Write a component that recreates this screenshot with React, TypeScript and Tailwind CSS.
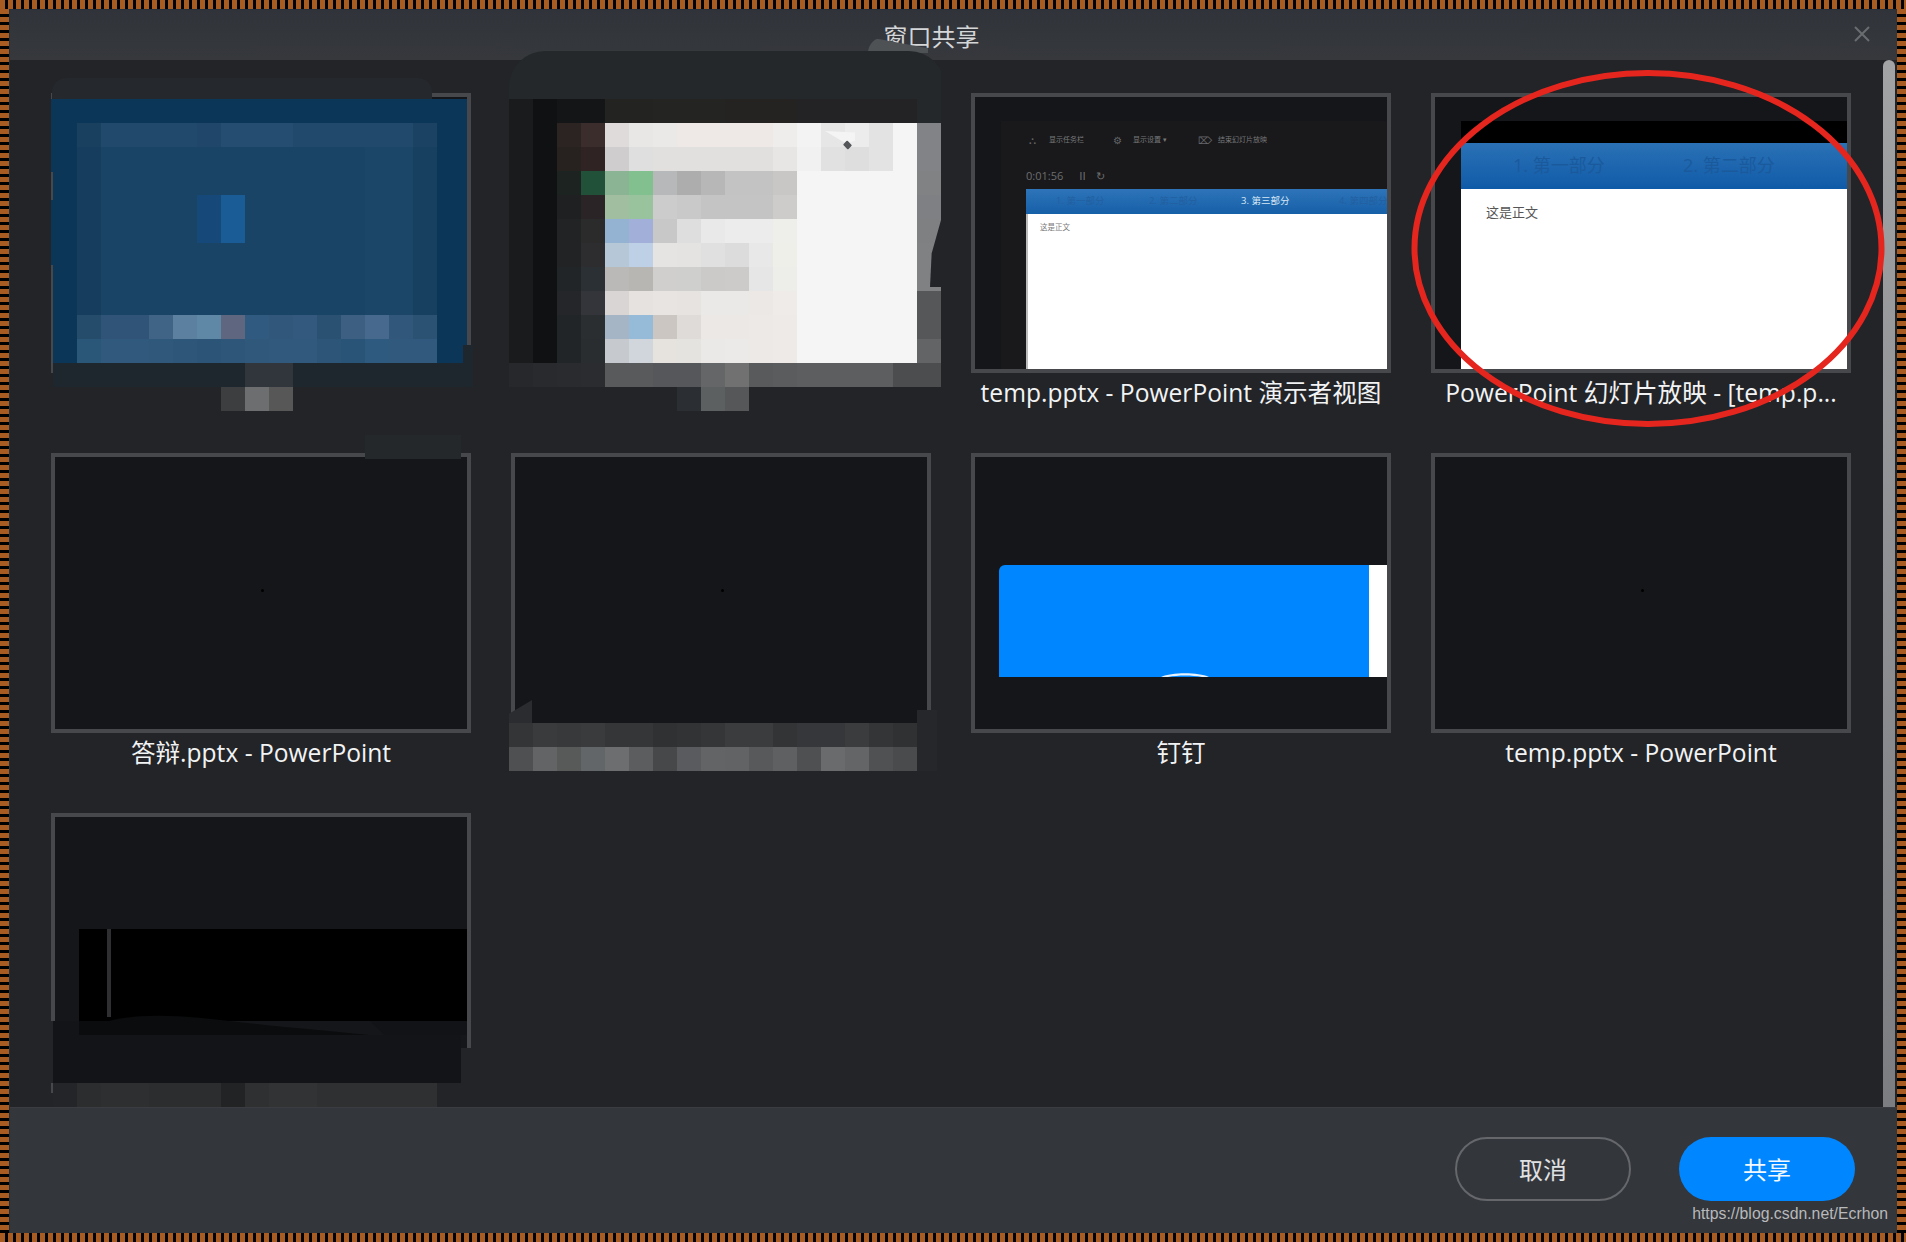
const FONT = "font-['Open_Sans','Noto_Sans_CJK_SC',sans-serif]";

type Cell = string | null;

// pixelated regions that were blurred out in the screenshot, 24px blocks
function Mosaic({ x, y, rows, cell = 24 }: { x: number; y: number; rows: Cell[][]; cell?: number }) {
  return (
    <div className="absolute flex flex-col" style={{ left: x, top: y }}>
      {rows.map((row, i) => (
        <div key={i} className="flex">
          {row.map((c, j) => (
            <div key={j} style={{ width: cell, height: cell, background: c ?? "transparent" }} />
          ))}
        </div>
      ))}
    </div>
  );
}

const W = "#f5f5f5";
const _ = null;

const BLUE_ROW = ["#173d5e", "#1a4466", "#1a4466", "#1a4466", "#1a4466", "#1a4466", "#1a4466", "#1a4466", "#1a4466", "#1a4466", "#1a4466", "#1a4466", "#1b4668", "#1b4668", "#173f60"];
const BLUE_ROW_MARK = ["#173d5e", "#1a4466", "#1a4466", "#1a4466", "#1a4466", "#16497a", "#1a5c96", "#1a4466", "#1a4466", "#1a4466", "#1a4466", "#1a4466", "#1b4668", "#1b4668", "#173f60"];

const MOSAIC_1: Cell[][] = [
  ["#1a4060", "#21496b", "#21496b", "#21496b", "#21496b", "#20466a", "#254d71", "#254d71", "#254d71", "#21496b", "#21496b", "#21496b", "#21496b", "#21496b", "#1c4263"],
  BLUE_ROW,
  BLUE_ROW,
  BLUE_ROW_MARK,
  BLUE_ROW_MARK,
  BLUE_ROW,
  BLUE_ROW,
  BLUE_ROW,
  ["#264c6c", "#2f5478", "#2f5478", "#3f6485", "#5c80a0", "#5f87a6", "#5e6680", "#305a80", "#31587b", "#335a7e", "#2a5072", "#3d6082", "#46698d", "#31587b", "#2b5272"],
  ["#2a5678", "#31597d", "#31597d", "#2f587b", "#2d5679", "#2b5477", "#2d5679", "#2f587b", "#31597d", "#31597d", "#2c5578", "#2a5378", "#2e5a80", "#31597d", "#31597d"],
];

const SIDE_L = ["#191b1d", "#101113"];

const MOSAIC_2: Cell[][] = [
  [...SIDE_L, "#141517", "#141517", "#232421", "#232421", "#242422", "#242422", "#242422", "#242321", "#242321", "#242321", "#232325", "#232325", "#232325", "#232325", "#232325", "#25282b"],
  [...SIDE_L, "#2b2422", "#3a2d2b", "#dedbda", "#e8e7e6", "#ebe9e8", "#eee9e7", "#eee9e7", "#eee9e7", "#eee9e7", "#efedeb", "#f3f3f3", "#e6e6e6", "#ececec", "#e3e3e3", W, "#818386"],
  [...SIDE_L, "#272120", "#2f2423", "#cfcdce", "#dfdfdf", "#e2e0df", "#e2e0df", "#e2e0df", "#e2e0df", "#e2e0df", "#e8e6e4", "#f1f1f1", "#e1e1e1", "#dedede", "#e3e3e3", W, "#818386"],
  [...SIDE_L, "#1d2320", "#215138", "#8ab494", "#82c18f", "#b6b8ba", "#adadad", "#b7b7b7", "#c3c3c3", "#c3c3c3", "#c9c7c5", W, W, W, W, W, "#808284"],
  [...SIDE_L, "#1f2021", "#2a2426", "#a1bea0", "#98c39c", "#cccccc", "#c9c9c9", "#c4c4c4", "#c4c4c4", "#c4c4c4", "#cdcccb", W, W, W, W, W, "#7e8083"],
  [...SIDE_L, "#222324", "#2c2b2c", "#94b3d3", "#a2afd8", "#c8c8c8", "#dedede", "#e9e9e9", "#ececec", "#ececec", "#eeeeea", W, W, W, W, W, "#7e8082"],
  [...SIDE_L, "#222324", "#2d2d2f", "#b6c7d7", "#bdd0e6", "#e6e4e3", "#e5e3e2", "#e0e0e0", "#dcdcdc", "#e8e8e8", "#efefe9", W, W, W, W, W, "#7f8183"],
  [...SIDE_L, "#222528", "#2b3034", "#bbb9b8", "#b8b6b3", "#d0cfcd", "#cfcfcd", "#cbcac8", "#cccbc9", "#e6e6e6", "#ededea", W, W, W, W, W, "#7f8183"],
  [...SIDE_L, "#24262a", "#33353a", "#d8d5d4", "#e6e2df", "#e8e4e1", "#e6e3e0", "#ebe9e7", "#ebe9e7", "#ebe8e5", "#eeebe8", W, W, W, W, W, "#555758"],
  [...SIDE_L, "#222528", "#2b2e31", "#a6b5c6", "#96bbd9", "#ccc6c2", "#dedbd8", "#ebe8e5", "#ebe8e5", "#ece9e6", "#edeae7", W, W, W, W, W, "#555758"],
  [...SIDE_L, "#222528", "#2a2d30", "#c6c9ce", "#d1d6dc", "#e6e2de", "#e5e3e0", "#ebe9e8", "#eceae9", "#ece9e6", "#eeeae7", W, W, W, W, W, "#626466"],
  ["#26282b", "#282a2d", "#292b2e", "#2a2c2f", "#585a5c", "#585a5c", "#55575a", "#55575a", "#646668", "#717172", "#585a5c", "#5a5c5e", "#5c5e60", "#5c5e60", "#5c5e60", "#5c5e60", "#4b4d4f", "#4b4d4f"],
  [_, _, _, _, _, _, _, "#2b2f33", "#5d6060", "#555759"],
];

const MOSAIC_6: Cell[][] = [
  ["#343537", "#3a3b3d", "#38393b", "#3a3b3d", "#353638", "#343638", "#2f3133", "#313335", "#353638", "#3b3c3e", "#3b3c3e", "#333436", "#36373a", "#36373a", "#3b3c3e", "#333537", "#2f3133", _],
  ["#4f5052", "#636466", "#585959", "#636669", "#6d6e6f", "#5c5d5e", "#47484a", "#595b5e", "#636466", "#626365", "#58595b", "#5f6062", "#4e5052", "#6a6b6d", "#636567", "#505153", "#4a4b4c", _],
];

function Card({ label, children }: { label?: string; children?: React.ReactNode }) {
  return (
    <div className="h-[360px] w-[420px]">
      <div className="relative h-[280px] w-[420px] overflow-hidden border-4 border-[#46484c] bg-[#141619]">
        {children}
      </div>
      {label && (
        <p className="mt-[2px] truncate px-2 text-center text-[24.6px] leading-[36px] text-[#f2f3f4]">{label}</p>
      )}
    </div>
  );
}

function ToolItem({ icon, text, className }: { icon: string; text: string; className: string }) {
  return (
    <span className={`flex items-center ${className}`}>
      <span className="w-[20px] text-[10px] leading-none text-[#66676a]">{icon}</span>
      <span>{text}</span>
    </span>
  );
}

function PresenterThumb() {
  return (
    <div className="ml-[26px] mt-[24px] flex h-full flex-col bg-[#19191b] pl-[25px]">
      <div className="flex h-[38px] items-center pl-[3px] text-[7px] text-[#77787a]">
        <ToolItem icon="⛬" text="显示任务栏" className="w-[84px]" />
        <ToolItem icon="⚙" text="显示设置 ▾" className="w-[85px]" />
        <ToolItem icon="⌦" text="结束幻灯片放映" className="" />
      </div>
      <div className="flex h-[30px] items-center pt-[5px] text-[11px] text-[#6c6d6f]">
        <span className="w-[51px]">0:01:56</span>
        <span className="w-[19px]">Ⅱ</span>
        <span>↻</span>
      </div>
      <div className="flex h-[25px] shrink-0 items-center bg-gradient-to-b from-[#2d74b9] to-[#1660a8] text-[9.5px] text-[#2260a0]">
        <span className="ml-[30px] w-[93px] shrink-0">1. 第一部分</span>
        <span className="w-[92px] shrink-0">2. 第二部分</span>
        <span className="w-[98px] shrink-0 text-[#d8e8f6]">3. 第三部分</span>
        <span className="shrink-0">4. 第四部分</span>
      </div>
      <div className="flex-1 border-l-2 border-[#bcbcbc] bg-white pl-[12px] pt-[6px] text-[7.5px] leading-[14px] text-[#777]">
        这是正文
      </div>
    </div>
  );
}

function SlideThumb() {
  return (
    <div className="ml-[26px] mt-[24px] flex h-full flex-col bg-black">
      <div className="mt-[22px] flex h-[46px] items-center bg-gradient-to-b from-[#2a71b5] to-[#0f5aa8] pb-[2px] pl-[52px] text-[18px] text-[#1a5a9c]">
        <span className="w-[170px] shrink-0">1. 第一部分</span>
        <span className="shrink-0">2. 第二部分</span>
      </div>
      <div className="flex-1 bg-white pl-[25px] pt-[14px] text-[13px] leading-[18px] text-[#555]">这是正文</div>
    </div>
  );
}

function DingThumb() {
  return (
    <div className="ml-[24px] mt-[108px] flex h-[112px]">
      <div className="relative w-[370px] rounded-tl-[6px] bg-[#0087ff]">
        <svg className="absolute bottom-0 left-[161px]" width="50" height="6" viewBox="0 0 50 6">
          <path d="M1 6C12 1 38 1 49 6Z" fill="#e8f2fc" />
          <path d="M8 6C18 4 32 4 42 6Z" fill="#0087ff" />
        </svg>
      </div>
      <div className="w-[18px] bg-white" />
    </div>
  );
}

function BlackThumb() {
  return (
    <div className="relative ml-[24px] mt-[112px] h-[92px] bg-black">
      <div className="absolute bottom-[4px] left-[28px] top-0 w-[4px] bg-[#2e2f31]" />
    </div>
  );
}

function CenterDot() {
  return <div className="absolute left-[206px] top-[132px] h-[3px] w-[3px] rounded-full bg-black" />;
}

export default function App() {
  return (
    <div className={`relative flex h-[1242px] w-[1906px] flex-col overflow-hidden bg-black ${FONT}`}>
      <div className="h-[9px] bg-[repeating-linear-gradient(90deg,#a85c22_0_5px,#000_5px_8px)]" />
      <div className="flex min-h-0 flex-1">
        <div className="w-[9px] bg-[repeating-linear-gradient(180deg,#a85c22_0_5px,#000_5px_8px)]" />

        <div className="flex min-w-0 flex-1 flex-col border-l border-t border-[#24303c] bg-[#222428]">
          <div className="relative flex h-[50px] shrink-0 items-center justify-center bg-gradient-to-b from-[#30343a] to-[#36383c] pr-[44px] text-[24px] text-[#d4d6d8]">
            <span className="translate-y-[2px]">窗口共享</span>
            <svg className="absolute right-[27px] top-[16px] h-4 w-4" viewBox="0 0 16 16">
              <path d="M1 1L15 15M15 1L1 15" stroke="#6a6d70" strokeWidth="2" />
            </svg>
          </div>

          <div className="relative min-h-0 flex-1 overflow-hidden">
            <div className="grid grid-cols-[repeat(4,420px)] gap-x-[40px] pl-[41px] pt-[33px]">
              <Card />
              <Card />
              <Card label="temp.pptx - PowerPoint 演示者视图">
                <PresenterThumb />
              </Card>
              <Card label="PowerPoint 幻灯片放映 - [temp.p...">
                <SlideThumb />
              </Card>
              <Card label="答辩.pptx - PowerPoint">
                <CenterDot />
              </Card>
              <Card>
                <CenterDot />
              </Card>
              <Card label="钉钉">
                <DingThumb />
              </Card>
              <Card label="temp.pptx - PowerPoint">
                <CenterDot />
              </Card>
              <Card>
                <BlackThumb />
              </Card>
            </div>
            <div className="absolute bottom-0 right-[2px] top-0 w-[12px] rounded-t-[6px] bg-gradient-to-b from-[#a2a3a5] to-[#7c7d80]" />
          </div>

          <div className="flex h-[126px] shrink-0 items-start justify-end gap-[48px] border-t border-[#3a3c42] bg-[#33363b] pr-[42px] pt-[29px]">
            <button className="h-[64px] w-[176px] rounded-full border-2 border-[#65676b] pt-[1px] text-[24px] text-[#e0e1e2]">
              取消
            </button>
            <button className="h-[64px] w-[176px] rounded-full bg-[#0087ff] pt-[1px] text-[24px] text-[#f4f9ff]">共享</button>
          </div>
        </div>

        <div className="w-[9px] bg-[repeating-linear-gradient(180deg,#a85c22_0_5px,#000_5px_8px)]" />
      </div>
      <div className="h-[9px] bg-[repeating-linear-gradient(90deg,#a85c22_0_5px,#000_5px_8px)]" />

      {/* card 1 redaction */}
      <div className="absolute left-[52px] top-[78px] h-[22px] w-[380px] rounded-t-[14px] bg-[#25282c]" />
      <div className="absolute left-[53px] top-[99px] h-[264px] w-[414px] bg-[#0c3658]" />
      <div className="absolute left-[51px] top-[99px] h-[73px] w-[3px] bg-[#0c3658]" />
      <div className="absolute left-[51px] top-[200px] h-[65px] w-[3px] bg-[#0c3658]" />
      <Mosaic x={77} y={123} rows={MOSAIC_1} />
      <div className="absolute left-[53px] top-[363px] h-[24px] w-[412px] bg-[#1f272e]" />
      <div className="absolute left-[463px] top-[345px] h-[42px] w-[10px] bg-[#1f272e]" />
      <Mosaic x={221} y={363} rows={[[_, "#30363c", "#30363c"], ["#3c3e40", "#6d6e70", "#575757"]]} />
      <div className="absolute left-[365px] top-[435px] h-[24px] w-[96px] bg-[#25282b]" />

      {/* card 2 redaction */}
      <div className="absolute left-[868px] top-[37px] h-[16px] w-[60px] rounded-tl-[16px] bg-[#4f5255] [clip-path:polygon(0_0,100%_70%,100%_100%,0_100%)]" />
      <div className="absolute left-[509px] top-[51px] h-[48px] w-[436px] rounded-t-[36px] bg-[#25282b]" />
      <Mosaic x={509} y={99} rows={MOSAIC_2} />
      <div className="absolute left-[941px] top-[60px] h-[340px] w-[18px] bg-[#222428]" />
      <div className="absolute left-[930px] top-[220px] h-[67px] w-[11px] bg-[#222428] [clip-path:polygon(100%_0,100%_100%,0_100%,15%_50%)]" />
      <div className="absolute left-[825px] top-[131px] h-[14px] w-[30px] bg-[#f4f4f4] [clip-path:polygon(0_0,100%_10%,100%_70%,70%_90%)]" />
      <div className="absolute left-[844px] top-[142px] h-[6px] w-[7px] rotate-45 rounded-[1px] bg-[#55565a]" />

      {/* card 6 redaction */}
      <div className="absolute left-[509px] top-[700px] h-[23px] w-[23px] bg-[#2a2c30] [clip-path:polygon(100%_0,100%_100%,0_100%,0_60%)]" />
      <div className="absolute left-[917px] top-[710px] h-[61px] w-[20px] bg-[#25272b]" />
      <Mosaic x={509} y={723} rows={MOSAIC_6} />

      {/* card 9 redaction */}
      <svg className="absolute left-[79px] top-[1013px]" width="300" height="22" viewBox="0 0 300 22">
        <path d="M0 8H30C60 0 100 2 150 8C200 14 250 18 290 22H0Z" fill="#0b0c0e" />
      </svg>
      <div className="absolute left-[53px] top-[1035px] h-[48px] w-[408px] bg-[#131417]" />
      <div className="absolute left-[53px] top-[1021px] h-[14px] w-[26px] bg-[#131417]" />
      <div className="absolute left-[370px] top-[1021px] h-[14px] w-[97px] bg-[#121316] [clip-path:polygon(0_0,100%_0,100%_100%,15%_100%)]" />
      <div className="absolute left-[47px] top-[1021px] h-[62px] w-[6px] bg-[#222428]" />
      <div className="absolute left-[461px] top-[1048px] h-[59px] w-[12px] bg-[#222428]" />
      <Mosaic
        x={53}
        y={1083}
        rows={[["#232528", "#2c2d2e", "#2e2f30", "#2e2f30", "#2c2d2e", "#2c2d2e", "#2c2d2e", "#222325", "#2f3031", "#323334", "#323334", "#2f3031", "#2f3031", "#2f3031", "#2f3031", "#2f3031", "#222428"]]}
      />

      {/* red ring drawn on the screenshot */}
      <svg className="pointer-events-none absolute left-[1404px] top-[62px]" width="490" height="372" viewBox="0 0 490 372">
        <ellipse cx="244" cy="186.5" rx="233.5" ry="175.5" fill="none" stroke="#e5261f" strokeWidth="6" />
      </svg>

      <span className="absolute right-[18px] top-[1204px] font-['Liberation_Sans',sans-serif] text-[15.8px] leading-[20px] text-[#b8b9ba]">
        https://blog.csdn.net/Ecrhon
      </span>
    </div>
  );
}
